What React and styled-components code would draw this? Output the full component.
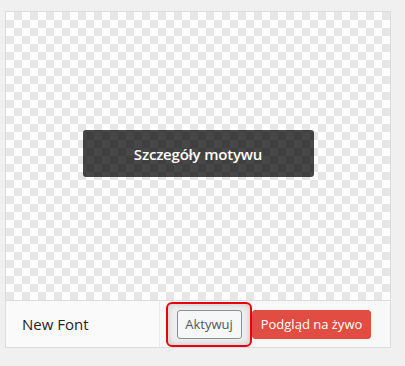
import React from "react";
import styled, { createGlobalStyle } from "styled-components";

const GlobalStyle = createGlobalStyle`
  body {
    margin: 0;
    background: #f0f0f1;
    font-family: "Open Sans", "Noto Sans", sans-serif;
  }
`;

const Page = styled.div`
  padding: 11px 0 0 5px;
  height: 366px;
  box-sizing: border-box;
`;

const Card = styled.div`
  width: 386px;
  box-sizing: border-box;
  border: 1px solid #dcdcde;
  background: #fff;
`;

const Screenshot = styled.div`
  height: 288px;
  display: flex;
  align-items: flex-start;
  justify-content: center;
  background-color: #fff;
  background-image: conic-gradient(
    #e6e6e6 25%,
    #fff 0 50%,
    #e6e6e6 0 75%,
    #fff 0
  );
  background-size: 16px 16px;
`;

const DetailsButton = styled.div`
  margin-top: 118px;
  width: 231px;
  height: 47px;
  display: flex;
  align-items: center;
  justify-content: center;
  background: rgba(0, 0, 0, 0.72);
  border-radius: 3px;
  color: #fff;
  font-size: 15px;
  font-weight: 600;
  letter-spacing: -0.2px;
`;

const Footer = styled.div`
  display: flex;
  align-items: center;
  height: 46px;
  border-top: 1px solid #dcdcde;
  background: #fafafa;
`;

const Name = styled.h2`
  margin: 0;
  padding-left: 16px;
  flex: 1;
  font-size: 15px;
  font-weight: 400;
  color: #1d2327;
`;

const Actions = styled.div`
  display: flex;
  align-items: center;
  height: 100%;
  padding-left: 6px;
  padding-right: 19px;
  border-left: 1px solid rgba(0, 0, 0, 0.05);
  background: rgba(246, 247, 247, 0.7);
`;

const FocusRing = styled.div`
  display: flex;
  align-items: center;
  justify-content: center;
  width: 86px;
  height: 45px;
  margin-top: 1px;
  box-sizing: border-box;
  border: 2px solid #e8000b;
  border-radius: 6px;
  background: #eeeeee;
  box-shadow: inset 0 0 6px rgba(0, 0, 0, 0.18);
`;

const Button = styled.button`
  width: ${p => (p.primary ? "119px" : "65px")};
  height: 29px;
  box-sizing: border-box;
  padding: 0;
  border-radius: 3px;
  font-family: inherit;
  font-size: 13px;
  line-height: 1;
  cursor: pointer;
  border: 1px solid ${p => (p.primary ? "#e14d43" : "#8c8f94")};
  background: ${p => (p.primary ? "#e14d43" : "#f6f7f7")};
  color: ${p => (p.primary ? "#fff" : "#50575e")};
`;

export default function App() {
  return (
    <Page>
      <GlobalStyle />
      <Card>
        <Screenshot>
          <DetailsButton>Szczegóły motywu</DetailsButton>
        </Screenshot>
        <Footer>
          <Name>New Font</Name>
          <Actions>
            <FocusRing>
              <Button>Aktywuj</Button>
            </FocusRing>
            <Button primary>Podgląd na żywo</Button>
          </Actions>
        </Footer>
      </Card>
    </Page>
  );
}
